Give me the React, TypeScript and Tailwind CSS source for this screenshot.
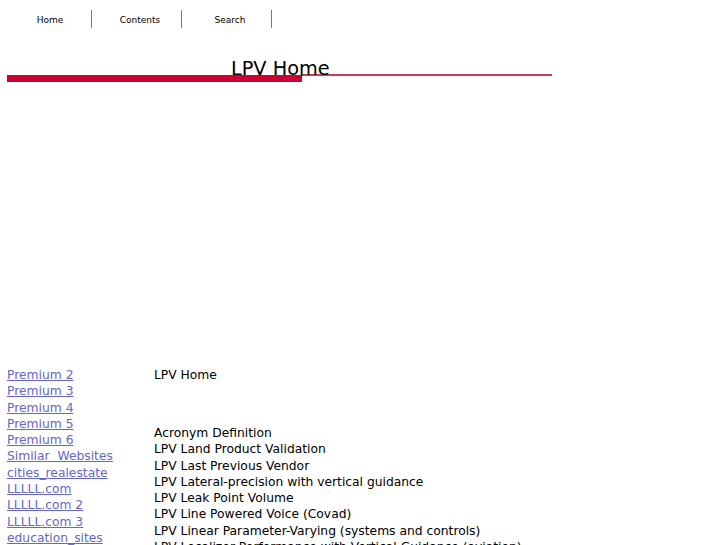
const navItems = ["Home", "Contents", "Search"];

const sideLinks = [
  "Premium 2",
  "Premium 3",
  "Premium 4",
  "Premium 5",
  "Premium 6",
  "Similar\u00a0\u00a0Websites",
  "cities_realestate",
  "LLLLL.com",
  "LLLLL.com 2",
  "LLLLL.com 3",
  "education_sites",
];

const definitions = [
  "LPV Land Product Validation",
  "LPV Last Previous Vendor",
  "LPV Lateral-precision with vertical guidance",
  "LPV Leak Point Volume",
  "LPV Line Powered Voice (Covad)",
  "LPV Linear Parameter-Varying (systems and controls)",
  "LPV Localizer Performance with Vertical Guidance (aviation)",
];

export default function App() {
  return (
    <div className="min-h-[545px] bg-white font-['DejaVu_Sans',Verdana,sans-serif] text-black">
      <nav className="flex pt-[10px] pl-[2px]">
        {navItems.map((item) => (
          <a
            key={item}
            href="#"
            className="flex h-[18px] w-[90px] items-center justify-center border-r border-[#7a7a7a] pt-[3px] pl-[7px] text-[9px] text-black no-underline"
          >
            {item}
          </a>
        ))}
      </nav>

      <div className="relative mt-[46px] ml-[7px] flex w-[545px] items-start">
        <div className="mt-[1px] h-[7px] w-[295px] bg-[#cc0033]" />
        <div className="h-[2px] flex-1 bg-[#d23a5a]" />
        <h1 className="absolute left-[224px] top-[-17px] text-[19.3px] leading-[24px] font-normal">
          LPV Home
        </h1>
      </div>

      <div className="mt-[285px] flex text-[12.3px] leading-[16.3px]">
        <ul className="w-[154px] shrink-0 pl-[7px]">
          {sideLinks.map((link) => (
            <li key={link}>
              <a href="#" className="text-[#6666cc] underline">
                {link}
              </a>
            </li>
          ))}
        </ul>
        <div className="whitespace-nowrap">
          <p>LPV Home</p>
          <p className="mt-[41.7px]">Acronym Definition</p>
          {definitions.map((d) => (
            <p key={d}>{d}</p>
          ))}
        </div>
      </div>
    </div>
  );
}
